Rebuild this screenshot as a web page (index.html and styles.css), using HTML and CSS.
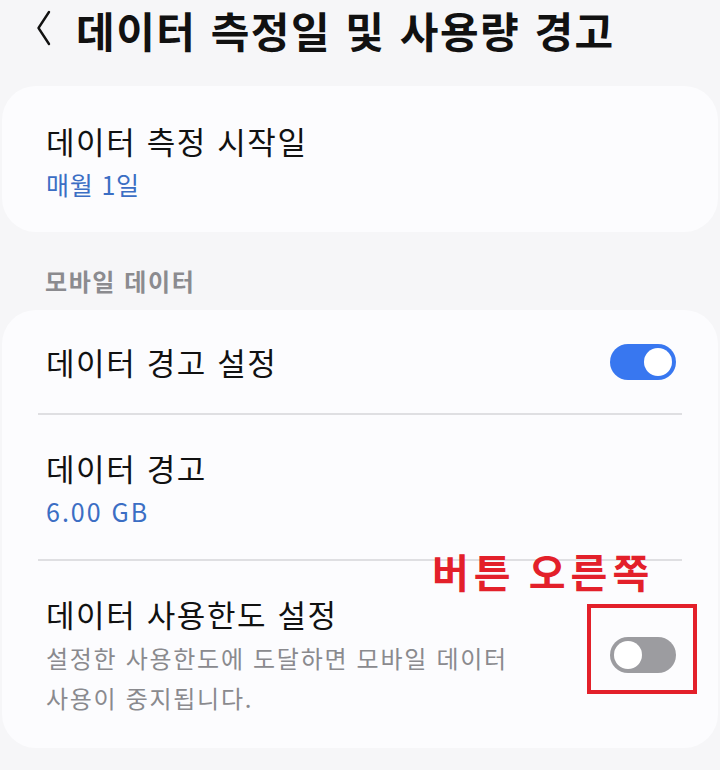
FILE: index.html
```html
<!DOCTYPE html>
<html lang="ko">
<head>
<meta charset="utf-8">
<link rel="stylesheet" href="styles.css">
</head>
<body>
<div class="screen">
  <header class="appbar">
    <svg class="back" viewBox="0 0 16 36" width="16" height="36">
      <path d="M13 2 L2.5 18 L13 34" fill="none" stroke="#111" stroke-width="2.4" stroke-linecap="round" stroke-linejoin="round"/>
    </svg>
    <h1 class="title">데이터 측정일 및 사용량 경고</h1>
  </header>

  <section class="card card-first">
    <div class="row row-single">
      <div class="label">데이터 측정 시작일</div>
      <div class="value">매월 1일</div>
    </div>
  </section>

  <div class="section-title">모바일 데이터</div>

  <section class="card">
    <div class="row row-switch row-top">
      <div class="label">데이터 경고 설정</div>
      <span class="switch on"><span class="knob"></span></span>
    </div>
    <div class="divider"></div>
    <div class="row row-mid">
      <div class="label">데이터 경고</div>
      <div class="value value-num">6.00 GB</div>
    </div>
    <div class="divider"></div>
    <div class="row row-switch row-last">
      <div class="texts">
        <div class="label">데이터 사용한도 설정</div>
        <div class="desc">설정한 사용한도에 도달하면 모바일 데이터<br>사용이 중지됩니다.</div>
      </div>
      <span class="switch off"><span class="knob"></span></span>
      <div class="note">버튼 오른쪽</div>
      <div class="mark"></div>
    </div>
  </section>
</div>
</body>
</html>
```

FILE: styles.css
```css
* { box-sizing: border-box; }

html, body {
  margin: 0;
  padding: 0;
  background: #f6f6f8;
}

body {
  width: 720px;
  height: 770px;
  overflow: hidden;
  font-family: "Noto Sans CJK KR", "Noto Sans", sans-serif;
  color: #111;
}

.screen {
  display: flex;
  flex-direction: column;
}

.appbar {
  height: 86px;
  display: flex;
  align-items: flex-start;
  padding: 2px 0 0 36px;
}

.back { flex: none; margin: 8px 24px 0 0; }

.title {
  flex: none;
  margin: 0;
  padding-right: 8px;
  font-size: 42px;
  font-weight: 700;
  word-spacing: 1px;
  letter-spacing: 1.5px;
  line-height: 56px;
}

.card {
  margin: 0 2px;
  background: #fcfcfe;
  border-radius: 34px;
  display: flex;
  flex-direction: column;
}

.row {
  padding: 0 44px;
  display: flex;
  flex-direction: column;
  justify-content: center;
}

.row-single { height: 146px; padding-top: 6px; }

.label {
  font-size: 31px;
  line-height: 44px;
  letter-spacing: 1.6px;
  color: #111;
}

.value {
  font-size: 25px;
  line-height: 42px;
  letter-spacing: 0.8px;
  color: #3b6ec4;
}

.value-num { letter-spacing: 2px; }

.section-title {
  height: 78px;
  padding: 18px 0 0 45px;
  font-size: 24px;
  font-weight: 700;
  letter-spacing: 1.6px;
  color: #8b8b8f;
  display: flex;
  align-items: center;
}

.row-switch {
  flex-direction: row;
  align-items: center;
  justify-content: space-between;
  padding-right: 42px;
}

.row-top { height: 103px; }
.row-mid { height: 144px; padding-top: 4px; }

.row-last {
  height: 187px;
  position: relative;
  padding-bottom: 0;
}

.desc {
  margin-top: 2px;
  font-size: 24px;
  line-height: 40px;
  letter-spacing: 1.7px;
  color: #8a8a8e;
}

.divider {
  height: 2px;
  margin: 0 36px;
  background: #dfdfe2;
}

.switch {
  position: relative;
  flex: none;
  width: 66px;
  height: 36px;
  border-radius: 18px;
}

.switch .knob {
  position: absolute;
  top: 4px;
  width: 28px;
  height: 28px;
  border-radius: 50%;
  background: #fff;
}

.switch.on { background: #3877f0; }
.switch.on .knob { right: 4px; }

.switch.off { background: #9c9ca0; }
.switch.off .knob { left: 4px; }

/* red annotation over the last row */
.note {
  position: absolute;
  left: 430px;
  top: -10px;
  font-size: 40px;
  font-weight: 700;
  color: #e3202a;
  letter-spacing: 5px;
  word-spacing: -3px;
  line-height: 1;
}

.mark {
  position: absolute;
  left: 585px;
  top: 43px;
  width: 110px;
  height: 90px;
  border: 4px solid #e3202a;
}
```
